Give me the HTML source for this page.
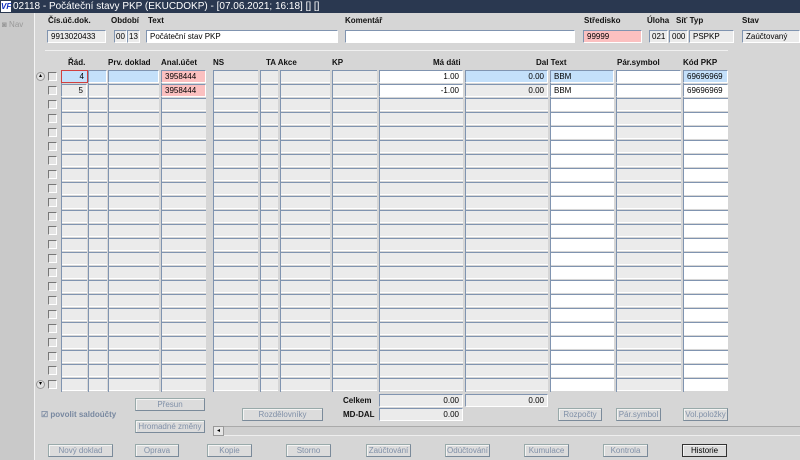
<!DOCTYPE html>
<html><head><meta charset="utf-8"><style>
*{margin:0;padding:0;box-sizing:border-box}
body{width:800px;height:460px;overflow:hidden;background:#d6d6d6;font-family:"Liberation Sans",sans-serif;font-size:8px;color:#000;position:relative}
.a{position:absolute}
.title{left:0;top:0;width:800px;height:13px;background:#2a3850;color:#fff;font-size:10px;line-height:13px;padding-left:13px}
.logo{left:1px;top:1px;width:10px;height:11px;background:#fff;color:#1030c0;font-size:8px;font-weight:bold;font-style:italic;line-height:11px;text-align:center}
.strip{left:0;top:13px;width:35px;height:447px;background:#c9c9c9;border-right:1px solid #f4f4f4}
.lbl{font-weight:bold;font-size:8px;color:#111}
.f{height:13px;border-top:1px solid #8094b0;border-left:1px solid #8094b0;border-bottom:1px solid #fff;border-right:1px solid #fff;background:#ebebeb;font-size:8px;line-height:11px;padding:0 3px;white-space:nowrap;overflow:hidden}
.w{background:#fff}
.p{background:#fbc0c0}
.b{background:#c4e0fa}
.r{text-align:right}
.col{top:70px;height:322px;border-left:1px solid #8094b0;background:linear-gradient(to bottom,#8094b0 0 1px,#ebebeb 1px 12px,#fff 12px 13px,transparent 13px 14px);background-size:100% 14px}
.colw{background:linear-gradient(to bottom,#8094b0 0 1px,#fff 1px 12px,#fff 12px 13px,transparent 13px 14px);background-size:100% 14px}
.ck{position:absolute;left:48px;width:9px;height:9px;border:1px solid #fff;border-top-color:#777;border-left-color:#777;background:#e4e4e4}
.btn{height:13px;border:1px solid #9aa;border-right-color:#7a8a9a;border-bottom-color:#7a8a9a;background:#dcdcdc;color:#8090a8;font-size:8px;line-height:11px;text-align:center;box-shadow:inset 1px 1px #f4f4f4}
</style></head><body>
<div class="a title">02118 - Počáteční stavy PKP (EKUCDOKP) - [07.06.2021; 16:18] [] []</div>
<div class="a logo">VF</div>
<div class="a strip"></div>
<div class="a" style="left:2px;top:20px;color:#999;font-size:8px">◙ Nav</div>

<div class="a lbl" style="left:48px;top:16px">Čís.úč.dok.</div>
<div class="a lbl" style="left:111px;top:16px">Období</div>
<div class="a lbl" style="left:148px;top:16px">Text</div>
<div class="a lbl" style="left:345px;top:16px">Komentář</div>
<div class="a lbl" style="left:584px;top:16px">Středisko</div>
<div class="a lbl" style="left:647px;top:16px">Úloha</div>
<div class="a lbl" style="left:676px;top:16px">Síť Typ</div>
<div class="a lbl" style="left:742px;top:16px">Stav</div>

<div class="a f" style="left:47px;top:30px;width:59px">9913020433</div>
<div class="a f" style="left:114px;top:30px;width:13px;padding:0 1px">00</div>
<div class="a f" style="left:127px;top:30px;width:13px;padding:0 1px">13</div>
<div class="a f w" style="left:146px;top:30px;width:192px">Počáteční stav PKP</div>
<div class="a f w" style="left:345px;top:30px;width:230px"></div>
<div class="a f p" style="left:583px;top:30px;width:59px">99999</div>
<div class="a f" style="left:649px;top:30px;width:19px;padding:0 2px">021</div>
<div class="a f" style="left:669px;top:30px;width:19px;padding:0 2px">000</div>
<div class="a f" style="left:689px;top:30px;width:45px">PSPKP</div>
<div class="a f" style="left:742px;top:30px;width:58px">Zaúčtovaný</div>
<div class="a" style="left:45px;top:50px;width:683px;height:1px;background:#aaa;border-bottom:1px solid #f0f0f0"></div>

<div class="a lbl" style="left:68px;top:58px">Řád.</div>
<div class="a lbl" style="left:108px;top:58px">Prv. doklad</div>
<div class="a lbl" style="left:161px;top:58px">Anal.účet</div>
<div class="a lbl" style="left:213px;top:58px">NS</div>
<div class="a lbl" style="left:266px;top:58px">TA Akce</div>
<div class="a lbl" style="left:332px;top:58px">KP</div>
<div class="a lbl" style="left:433px;top:58px">Má dáti</div>
<div class="a lbl" style="left:536px;top:58px">Dal Text</div>
<div class="a lbl" style="left:617px;top:58px">Pár.symbol</div>
<div class="a lbl" style="left:683px;top:58px">Kód PKP</div>

<div class="ck" style="top:72px"></div><div class="ck" style="top:86px"></div><div class="ck" style="top:100px"></div><div class="ck" style="top:114px"></div><div class="ck" style="top:128px"></div><div class="ck" style="top:142px"></div><div class="ck" style="top:156px"></div><div class="ck" style="top:170px"></div><div class="ck" style="top:184px"></div><div class="ck" style="top:198px"></div><div class="ck" style="top:212px"></div><div class="ck" style="top:226px"></div><div class="ck" style="top:240px"></div><div class="ck" style="top:254px"></div><div class="ck" style="top:268px"></div><div class="ck" style="top:282px"></div><div class="ck" style="top:296px"></div><div class="ck" style="top:310px"></div><div class="ck" style="top:324px"></div><div class="ck" style="top:338px"></div><div class="ck" style="top:352px"></div><div class="ck" style="top:366px"></div><div class="ck" style="top:380px"></div>

<div class="a col" style="left:61px;width:26px"></div>
<div class="a col" style="left:88px;width:19px"></div>
<div class="a col" style="left:108px;width:51px"></div>
<div class="a col" style="left:161px;width:45px"></div>
<div class="a col" style="left:213px;width:45px"></div>
<div class="a col" style="left:260px;width:18px"></div>
<div class="a col" style="left:280px;width:50px"></div>
<div class="a col" style="left:332px;width:45px"></div>
<div class="a col" style="left:379px;width:84px"></div>
<div class="a col" style="left:465px;width:83px"></div>
<div class="a col colw" style="left:550px;width:64px"></div>
<div class="a col" style="left:616px;width:65px"></div>
<div class="a col colw" style="left:683px;width:45px"></div>

<div class="a f b r" style="left:61px;top:70px;width:27px;border:1px solid #d04040">4</div>
<div class="a f b" style="left:88px;top:70px;width:19px"></div>
<div class="a f b" style="left:108px;top:70px;width:51px"></div>
<div class="a f p" style="left:161px;top:70px;width:45px">3958444</div>
<div class="a f w r" style="left:379px;top:70px;width:84px">1.00</div>
<div class="a f b r" style="left:465px;top:70px;width:83px">0.00</div>
<div class="a f b" style="left:550px;top:70px;width:64px">BBM</div>
<div class="a f w" style="left:616px;top:70px;width:65px"></div>
<div class="a f b" style="left:683px;top:70px;width:45px">69696969</div>

<div class="a f r" style="left:61px;top:84px;width:26px">5</div>
<div class="a f p" style="left:161px;top:84px;width:45px">3958444</div>
<div class="a f w r" style="left:379px;top:84px;width:84px">-1.00</div>
<div class="a f r" style="left:465px;top:84px;width:83px">0.00</div>
<div class="a f w" style="left:550px;top:84px;width:64px">BBM</div>
<div class="a f w" style="left:616px;top:84px;width:65px"></div>
<div class="a f w" style="left:683px;top:84px;width:45px">69696969</div>

<div class="a" style="left:36px;top:72px;width:9px;height:9px;border-radius:50%;background:#e0e0e0;border:1px solid #999;font-size:6px;line-height:7px;text-align:center">▴</div>
<div class="a" style="left:36px;top:380px;width:9px;height:9px;border-radius:50%;background:#e0e0e0;border:1px solid #999;font-size:6px;line-height:7px;text-align:center">▾</div>

<div class="a lbl" style="left:343px;top:396px">Celkem</div>
<div class="a lbl" style="left:343px;top:410px">MD-DAL</div>
<div class="a f r" style="left:379px;top:394px;width:84px">0.00</div>
<div class="a f r" style="left:465px;top:394px;width:83px">0.00</div>
<div class="a f r" style="left:379px;top:408px;width:84px">0.00</div>

<div class="a" style="left:41px;top:410px;font-size:8px;font-weight:bold;color:#7888a0">☑ povolit saldoúčty</div>
<div class="a btn" style="left:135px;top:398px;width:70px">Přesun</div>
<div class="a btn" style="left:135px;top:420px;width:70px">Hromadné změny</div>
<div class="a btn" style="left:242px;top:408px;width:81px">Rozdělovníky</div>
<div class="a btn" style="left:558px;top:408px;width:44px">Rozpočty</div>
<div class="a btn" style="left:616px;top:408px;width:45px">Pár.symbol</div>
<div class="a btn" style="left:683px;top:408px;width:45px">Vol.položky</div>
<div class="a" style="left:213px;top:426px;width:587px;height:10px;background:#cfcfcf;border-top:1px solid #aaa;border-bottom:1px solid #eee"></div>
<div class="a" style="left:213px;top:426px;width:11px;height:10px;background:#e6e6e6;border:1px solid #999;font-size:6px;line-height:8px;text-align:center">◂</div>

<div class="a btn" style="left:48px;top:444px;width:65px">Nový doklad</div>
<div class="a btn" style="left:135px;top:444px;width:44px">Oprava</div>
<div class="a btn" style="left:207px;top:444px;width:45px">Kopie</div>
<div class="a btn" style="left:286px;top:444px;width:45px">Storno</div>
<div class="a btn" style="left:366px;top:444px;width:45px">Zaúčtování</div>
<div class="a btn" style="left:445px;top:444px;width:45px">Odúčtování</div>
<div class="a btn" style="left:524px;top:444px;width:45px">Kumulace</div>
<div class="a btn" style="left:603px;top:444px;width:45px">Kontrola</div>
<div class="a btn" style="left:682px;top:444px;width:45px;color:#000;border-color:#333">Historie</div>
</body></html>
